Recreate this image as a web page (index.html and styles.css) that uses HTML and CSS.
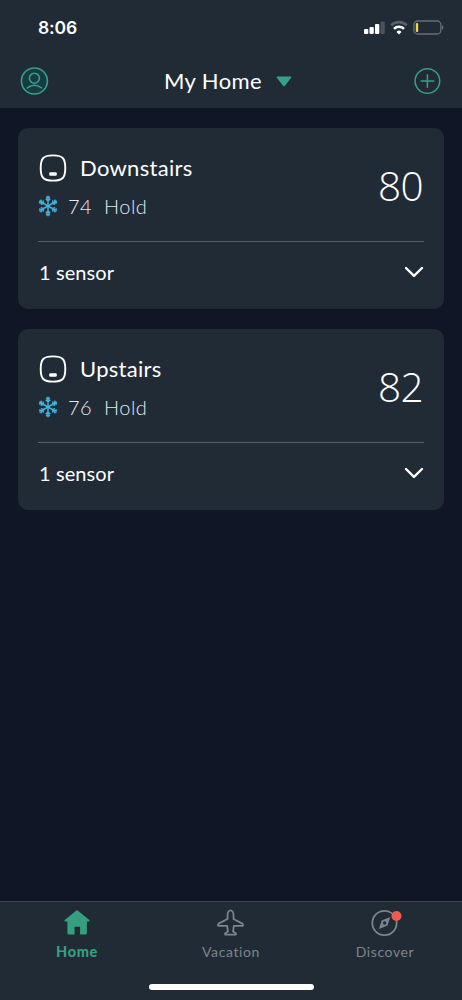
FILE: index.html
```html
<!DOCTYPE html>
<html lang="en">
<head>
<meta charset="utf-8">
<title>My Home</title>
<link rel="stylesheet" href="styles.css">
</head>
<body>
<svg class="defs" aria-hidden="true">
  <symbol id="thermostat" viewBox="0 0 28 28">
    <path d="M14 1.4C23.6 1.4 26.3 4.2 26.3 14S23.6 26.6 14 26.6 1.7 23.8 1.7 14 4.4 1.4 14 1.4Z" fill="none" stroke="currentColor" stroke-width="1.9"/>
    <rect x="10.2" y="18.2" width="7.6" height="3.6" rx="1.3" fill="currentColor"/>
  </symbol>
  <symbol id="arm" viewBox="0 0 22 22" overflow="visible">
    <path d="M11 11V-.2M8.9.8 11 2.7 13.1.8M8.5 3.2 11 5.3 13.5 3.2"/>
  </symbol>
  <symbol id="snow" viewBox="0 0 22 22" overflow="visible">
    <g fill="none" stroke="currentColor" stroke-width="1.6">
      <use href="#arm" width="22" height="22"/>
      <use href="#arm" width="22" height="22" transform="rotate(60 11 11)"/>
      <use href="#arm" width="22" height="22" transform="rotate(120 11 11)"/>
      <use href="#arm" width="22" height="22" transform="rotate(180 11 11)"/>
      <use href="#arm" width="22" height="22" transform="rotate(240 11 11)"/>
      <use href="#arm" width="22" height="22" transform="rotate(300 11 11)"/>
    </g>
  </symbol>
  <symbol id="chevron" viewBox="0 0 20 12">
    <path d="M2 2 10 9.9 18 2" fill="none" stroke="currentColor" stroke-width="2.4" stroke-linecap="round" stroke-linejoin="round"/>
  </symbol>
</svg>
<div class="screen">
  <header class="top">
    <div class="status">
      <span class="time">8:06</span>
      <svg class="indicators" width="80" height="16" viewBox="0 0 80 16">
        <g fill="#fff">
          <rect x="0" y="9" width="4.3" height="5" rx="1"/>
          <rect x="5.5" y="7" width="4.3" height="7" rx="1"/>
          <rect x="11" y="4" width="4.3" height="10" rx="1"/>
          <rect x="16.5" y="1.5" width="4.3" height="12.5" rx="1" fill="#4b535e"/>
        </g>
        <g fill="none" stroke-width="2.6">
          <path d="M27.2 5.3a11.2 11.2 0 0 1 15.6 0" stroke="#59616b"/>
          <path d="M30 8.8a7 7 0 0 1 10 0" stroke="#fff"/>
        </g>
        <path d="M35 14.4 32.5 11.9a3.5 3.5 0 0 1 5 0Z" fill="#fff"/>
        <rect x="49.9" y="1" width="27" height="13" rx="3.8" fill="none" stroke="#686f78" stroke-width="1.3"/>
        <rect x="51.8" y="3" width="2.4" height="9" rx="1" fill="#f2d34c"/>
        <path d="M78 5.3q3 2.2 0 4.4Z" fill="#686f78"/>
      </svg>
    </div>
    <div class="nav">
      <svg width="29" height="28" viewBox="0 0 29 28" fill="none" stroke="#389f89" stroke-width="1.6">
        <circle cx="14.4" cy="14" r="13" fill="#163c42"/>
        <circle cx="14.4" cy="11.2" r="5"/>
        <path d="M7.4 20.8Q14.4 15.7 21.4 20.8" stroke-linecap="round"/>
      </svg>
      <div class="title"><span>My Home</span>
        <svg width="16" height="11" viewBox="0 0 16 11"><path d="M1.4.5h13.2q1.4 0 .5 1.2L9 9.7q-1 1.2-2 0L.9 1.7Q0 .5 1.4.5Z" fill="#359f87"/></svg>
      </div>
      <svg width="28" height="28" viewBox="0 0 28 28" fill="none" stroke="#389f89" stroke-width="1.5">
        <circle cx="14.4" cy="14" r="12.3"/>
        <path d="M14.4 7.7v12.6M8.1 14h12.6" stroke-linecap="round"/>
      </svg>
    </div>
  </header>
  <main class="cards">
    <section class="card">
      <div class="summary">
        <div class="info">
          <h2 class="name"><svg class="device"><use href="#thermostat"/></svg><span>Downstairs</span></h2>
          <p class="state"><svg class="flake"><use href="#snow"/></svg><span class="set">74</span><span>Hold</span></p>
        </div>
        <div class="temp">80</div>
      </div>
      <div class="sensors"><span>1 sensor</span><svg class="chevron"><use href="#chevron"/></svg></div>
    </section>
    <section class="card">
      <div class="summary">
        <div class="info">
          <h2 class="name"><svg class="device"><use href="#thermostat"/></svg><span>Upstairs</span></h2>
          <p class="state"><svg class="flake"><use href="#snow"/></svg><span class="set">76</span><span>Hold</span></p>
        </div>
        <div class="temp">82</div>
      </div>
      <div class="sensors"><span>1 sensor</span><svg class="chevron"><use href="#chevron"/></svg></div>
    </section>
  </main>
  <footer class="bottom">
    <nav class="tabs">
      <a class="tab active">
        <svg width="28" height="28" viewBox="0 0 28 28"><path d="M13 1.8q1-.9 2 0L26.3 11q1.2 1.3-.4 1.5h-2V24q0 1.5-1.5 1.5h-5.3v-7.8h-5.6v7.8H5.9q-1.5 0-1.5-1.5V12.5H2.2Q.6 12.3 1.8 11Z" fill="currentColor"/></svg>
        <span>Home</span>
      </a>
      <a class="tab">
        <svg width="28" height="28" viewBox="0.5 0 28 28" fill="none" stroke="currentColor" stroke-width="1.8" stroke-linejoin="round"><path d="M14 1.4C12.2 1.4 11 4 11 6.3V10L2.6 14.4C1.2 15.2 1 16.8 2.3 16.8H10.7L11.4 22.4 8.8 24.2Q8.2 25.7 9 25.7H19Q19.8 25.7 19.2 24.2L16.6 22.4 17.3 16.8H25.7C27 16.8 26.8 15.2 25.4 14.4L17 10V6.3C17 4 15.8 1.4 14 1.4Z"/></svg>
        <span>Vacation</span>
      </a>
      <a class="tab">
        <svg width="36" height="28" viewBox="-3.5 0 36 28"><circle cx="14" cy="14" r="12.2" fill="none" stroke="currentColor" stroke-width="1.8"/><path d="M19.8 8 17 16.6 8.4 20 11.2 11.4Z" fill="currentColor"/><circle cx="14.1" cy="14" r="1.7" fill="#212b36"/><circle cx="26" cy="7" r="5" fill="#ed5c4e"/></svg>
        <span>Discover</span>
      </a>
    </nav>
    <div class="handle"></div>
  </footer>
</div>
</body>
</html>
```
FILE: styles.css
```css
* { box-sizing: border-box; }
body { margin: 0; background: #101625; color: #fff; font-family: Lato, "Open Sans", sans-serif; }
svg { display: block; flex: none; }
.defs { position: absolute; width: 0; height: 0; }
.screen { height: 1000px; display: flex; flex-direction: column; }

.top { height: 108px; background: #212b36; }
.status { height: 54px; padding: 8px 18px 6px 38px; display: flex; align-items: center; justify-content: space-between; }
.time { font: 600 17.5px/24px Inter, sans-serif; letter-spacing: -0.1px; }
.nav { height: 54px; padding: 0 21px 0 20px; display: flex; align-items: center; justify-content: space-between; }
.title { padding-right: 6px; display: flex; align-items: center; gap: 14px; font-size: 22px; line-height: 28px; letter-spacing: 0.4px; }

.cards { flex: 1; padding: 20px 18px 0; display: flex; flex-direction: column; gap: 20px; }
.card { height: 181px; padding: 0 20px; border-radius: 10px; background: #212b36; }
.summary { height: 114px; border-bottom: 1px solid #56606b; display: flex; justify-content: space-between; }
.info { padding-top: 25px; }
.name { height: 29px; margin: 0; padding-left: 1px; display: flex; align-items: center; gap: 13px; font-size: 22px; font-weight: 400; letter-spacing: 0.3px; }
.device { width: 28px; height: 28px; }
.state { height: 28px; margin: 10px 0 0; display: flex; align-items: center; font-size: 20px; font-weight: 300; letter-spacing: 0.5px; color: #e5e8ec; }
.flake { width: 20px; height: 22px; margin-right: 10px; color: #43b1da; overflow: visible; }
.set { width: 36px; }
.temp { padding: 33px 1px 0 0; font: 300 40.5px/49px "Open Sans", sans-serif; letter-spacing: -0.6px; }
.sensors { height: 59px; padding-left: 1px; display: flex; align-items: center; justify-content: space-between; font-size: 20px; letter-spacing: 0.1px; }
.chevron { width: 20px; height: 12px; }

.bottom { height: 99px; border-top: 1px solid #40434f; background: #212b36; display: flex; flex-direction: column; align-items: center; }
.tabs { width: 100%; height: 82px; display: grid; grid-template-columns: repeat(3, 1fr); }
.tab { padding-top: 7px; display: flex; flex-direction: column; align-items: center; gap: 5px; font-size: 14px; line-height: 20px; letter-spacing: 0.6px; color: #7c848e; }
.active { color: #359f80; font-weight: 900; font-size: 14.5px; }
.handle { width: 165px; height: 6px; border-radius: 3px; background: #fff; }
```
